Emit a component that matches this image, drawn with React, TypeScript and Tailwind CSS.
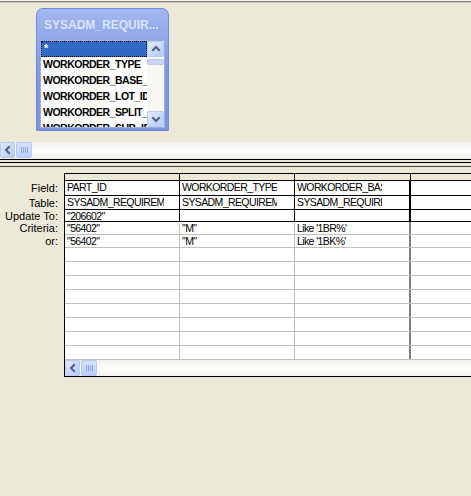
import React from 'react';

function Arrow({ dir }: { dir: 'left' | 'up' | 'down' }) {
  const d =
    dir === 'left' ? 'M6 2 L3 5 L6 8' : dir === 'up' ? 'M2 6 L5 3 L8 6' : 'M2 4 L5 7 L8 4';
  return (
    <svg width="10" height="10" viewBox="0 0 10 10">
      <path d={d} fill="none" stroke="#4D6185" strokeWidth="2" strokeLinecap="square" />
    </svg>
  );
}

function ScrollBtn({ dir, className = '' }: { dir: 'left' | 'up' | 'down'; className?: string }) {
  return (
    <div
      className={`flex items-center justify-center rounded-[2px] border border-[#B7C9F5] bg-gradient-to-br from-[#E4ECFE] to-[#B4C8F6] ${className}`}
    >
      <Arrow dir={dir} />
    </div>
  );
}

function HThumb({ className = '' }: { className?: string }) {
  return (
    <div
      className={`flex items-center justify-center gap-[1px] rounded-[2px] border border-[#B7C9F5] bg-gradient-to-b from-[#D7E2FD] to-[#BCCEF8] ${className}`}
    >
      <div className="h-[6px] w-[1px] bg-[#8CA6E6]" />
      <div className="h-[6px] w-[1px] bg-[#8CA6E6]" />
      <div className="h-[6px] w-[1px] bg-[#8CA6E6]" />
      <div className="h-[6px] w-[1px] bg-[#8CA6E6]" />
    </div>
  );
}

function HScroll({ className = '' }: { className?: string }) {
  return (
    <div className={`flex h-[16px] shrink-0 bg-gradient-to-b from-[#F3F1EC] via-[#FEFEFE] to-[#F3F2EC] ${className}`}>
      <ScrollBtn dir="left" className="h-[16px] w-[15px]" />
      <HThumb className="ml-[1px] h-[16px] w-[16px]" />
    </div>
  );
}

const fields = ['*', 'WORKORDER_TYPE', 'WORKORDER_BASE_ID', 'WORKORDER_LOT_ID', 'WORKORDER_SPLIT_ID', 'WORKORDER_SUB_ID'];

function TableWindow() {
  return (
    <div className="ml-[36px] mt-[5px] flex h-[123px] w-[133px] flex-col rounded-t-[7px] border border-[#7189D8] bg-gradient-to-b from-[#A3B7EF] via-[#7F98E1] to-[#7C94DF] px-[3px] pb-[2px]">
      <div className="flex h-[31px] shrink-0 items-center pl-[4px] text-[12px] font-bold text-[#D9E3F8]">
        SYSADM_REQUIR...
      </div>
      <div className="flex min-h-0 flex-1 border border-[#9DAFD8] bg-white">
        <div className="min-w-0 flex-1 overflow-hidden text-[10.5px] font-bold tracking-[-0.5px] text-black">
          {fields.map((f, i) => (
            <div
              key={f}
              className={`flex h-[16px] items-center whitespace-nowrap pl-[2px] ${
                i === 0 ? 'border border-dotted border-black bg-[#316AC5] text-white' : ''
              }`}
            >
              {f}
            </div>
          ))}
        </div>
        <div className="flex w-[17px] shrink-0 flex-col bg-[#F8F8F4]">
          <ScrollBtn dir="up" className="h-[16px] w-[17px]" />
          <div className="mt-[2px] h-[6px] w-[17px] rounded-[2px] border border-[#B7C9F5] bg-[#C8D6FA]" />
          <div className="flex-1" />
          <ScrollBtn dir="down" className="h-[16px] w-[17px]" />
        </div>
      </div>
    </div>
  );
}

type Row = { label: string; cells: string[]; h: string; lh: string; strong: boolean };

const rows: Row[] = [
  { label: 'Field:', cells: ['PART_ID', 'WORKORDER_TYPE', 'WORKORDER_BASE_ID', ''], h: 'h-[14px]', lh: 'h-[15px]', strong: true },
  { label: 'Table:', cells: ['SYSADM_REQUIREMENT', 'SYSADM_REQUIREMENT', 'SYSADM_REQUIREMENT', ''], h: 'h-[13px]', lh: 'h-[14px]', strong: true },
  { label: 'Update To:', cells: ['"206602"', '', '', ''], h: 'h-[11px]', lh: 'h-[12px]', strong: true },
  { label: 'Criteria:', cells: ['"56402"', '"M"', "Like '1BR%'", ''], h: 'h-[12px]', lh: 'h-[13px]', strong: false },
  { label: 'or:', cells: ['"56402"', '"M"', "Like '1BK%'", ''], h: 'h-[12px]', lh: 'h-[13px]', strong: false },
  ...Array.from({ length: 8 }, () => ({ label: '', cells: ['', '', '', ''], h: 'h-[13px]', lh: 'h-[14px]', strong: false })),
];

function Cell({ text, clip, border }: { text: string; clip: string; border: string }) {
  return (
    <div className={`shrink-0 overflow-hidden ${border} pl-[2px]`}>
      <span className={`block overflow-hidden whitespace-nowrap leading-[12px] ${clip}`}>{text}</span>
    </div>
  );
}

function Grid() {
  return (
    <div className="mt-[6px] flex">
      <div className="w-[64px] shrink-0 pt-[8px] text-right text-[11px] text-black">
        {rows.slice(0, 5).map((r) => (
          <div key={r.label} className={`${r.lh} flex items-center justify-end pr-[6px]`}>
            {r.label}
          </div>
        ))}
      </div>
      <div className="flex h-[204px] flex-1 flex-col overflow-hidden border-b border-l border-t border-black bg-white">
        <div className="flex h-[7px] shrink-0 border-b border-black bg-[#ECE9D8]">
          <div className="w-[115px] shrink-0 border-r border-black" />
          <div className="w-[115px] shrink-0 border-r border-black" />
          <div className="w-[116px] shrink-0 border-r border-black" />
          <div className="flex-1" />
        </div>
        <div className="min-h-0 flex-1 overflow-hidden text-[10.5px] tracking-[-0.6px] text-black">
          {rows.map((r, i) => {
            const line = r.strong ? 'border-black' : 'border-[#C0C0C0]';
            const thick = r.strong ? 'border-black' : 'border-[#808080]';
            return (
              <div key={i} className={`box-content flex ${r.h} border-b ${line}`}>
                <Cell text={r.cells[0]} clip="max-w-[97px]" border={`w-[115px] border-r ${line}`} />
                <Cell text={r.cells[1]} clip="max-w-[95px]" border={`w-[115px] border-r ${line}`} />
                <Cell text={r.cells[2]} clip="max-w-[85px]" border={`w-[116px] border-r-2 ${thick}`} />
                <div className="flex-1" />
              </div>
            );
          })}
        </div>
        <HScroll />
      </div>
    </div>
  );
}

export default function App() {
  return (
    <div className="flex h-[496px] w-[471px] flex-col overflow-hidden bg-[#ECE9D8] font-['Liberation_Sans',Arial,sans-serif]">
      <div className="h-[3px] shrink-0 border-b border-t border-b-[#C5C2B2] border-t-[#F5F4EE] bg-[#85837A]" />
      <div className="h-[139px] shrink-0">
        <TableWindow />
      </div>
      <HScroll />
      <div className="mt-[1px] h-[1px] bg-black" />
      <div className="h-[2px]" />
      <div className="h-[1px] bg-black" />
      <div className="h-[3px]" />
      <div className="h-[1px] bg-[#404040]" />
      <Grid />
    </div>
  );
}
